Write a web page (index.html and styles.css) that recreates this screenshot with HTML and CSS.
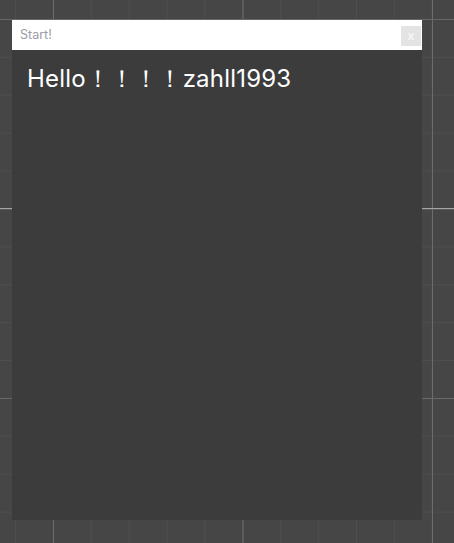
FILE: index.html
```html
<!DOCTYPE html>
<html>
<head>
<meta charset="utf-8">
<link rel="stylesheet" href="styles.css">
</head>
<body>
<div class="stage">
  <div class="panel">
    <div class="header">
      <span class="title">Start!</span>
      <button class="close">x</button>
    </div>
    <div class="content">
      <div class="greeting">Hello！！！！zahll1993</div>
    </div>
  </div>
</div>
</body>
</html>
```
FILE: styles.css
```css
html, body {
  margin: 0;
  padding: 0;
  height: 100%;
}
body {
  background-color: #464646;
  background-image:
    linear-gradient(to bottom, transparent 208px, #a6a6a6 208px, #a6a6a6 209px, transparent 209px),
    linear-gradient(to bottom, #686868 1px, transparent 1px),
    linear-gradient(to right, #6c6c6c 1px, transparent 1px),
    linear-gradient(to bottom, #4e4e4e 1px, transparent 1px),
    linear-gradient(to right, #4e4e4e 1px, transparent 1px);
  background-size:
    100% 100%,
    100% 189.5px,
    189.5px 100%,
    100% 37.9px,
    37.9px 100%;
  background-position:
    0 0,
    0 19px,
    53px 0,
    0 19px,
    15px 0;
  font-family: Inter, "Noto Sans", sans-serif;
  overflow: hidden;
}
.stage {
  padding: 20px 0 0 12px;
}
.panel {
  width: 410px;
  height: 500px;
  background: #3c3c3c;
  display: flex;
  flex-direction: column;
}
.header {
  height: 30px;
  background: #ffffff;
  display: flex;
  align-items: center;
  justify-content: space-between;
  padding: 0 1px 0 8px;
  box-sizing: border-box;
}
.title {
  font-size: 12.5px;
  color: #9c9aa6;
  margin-top: -1px;
}
.close {
  width: 20px;
  height: 20px;
  border: none;
  padding: 0;
  margin-top: 2px;
  background: #e3e3e3;
  color: #f4f4f4;
  font-family: Inter, sans-serif;
  font-size: 12px;
  font-weight: 700;
  line-height: 20px;
  text-align: center;
}
.content {
  padding: 14px 15px;
}
.greeting {
  color: #ffffff;
  font-size: 24px;
  line-height: 30px;
  letter-spacing: 0.2px;
}
```
